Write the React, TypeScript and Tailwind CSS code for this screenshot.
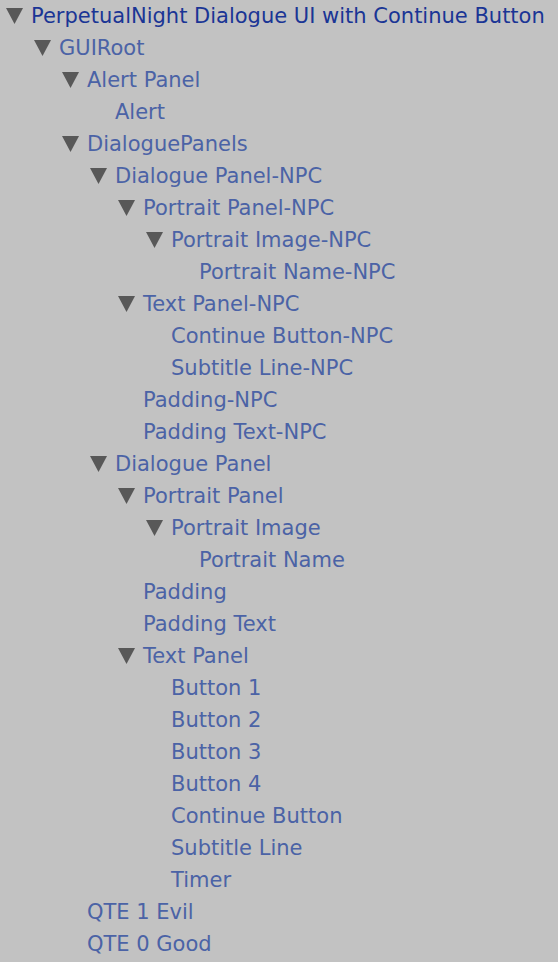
import React from 'react';

type Node = { name: string; level: number; open?: boolean; root?: boolean };

const nodes: Node[] = [
  { name: 'PerpetualNight Dialogue UI with Continue Button', level: 0, open: true, root: true },
  { name: 'GUIRoot', level: 1, open: true },
  { name: 'Alert Panel', level: 2, open: true },
  { name: 'Alert', level: 3 },
  { name: 'DialoguePanels', level: 2, open: true },
  { name: 'Dialogue Panel-NPC', level: 3, open: true },
  { name: 'Portrait Panel-NPC', level: 4, open: true },
  { name: 'Portrait Image-NPC', level: 5, open: true },
  { name: 'Portrait Name-NPC', level: 6 },
  { name: 'Text Panel-NPC', level: 4, open: true },
  { name: 'Continue Button-NPC', level: 5 },
  { name: 'Subtitle Line-NPC', level: 5 },
  { name: 'Padding-NPC', level: 4 },
  { name: 'Padding Text-NPC', level: 4 },
  { name: 'Dialogue Panel', level: 3, open: true },
  { name: 'Portrait Panel', level: 4, open: true },
  { name: 'Portrait Image', level: 5, open: true },
  { name: 'Portrait Name', level: 6 },
  { name: 'Padding', level: 4 },
  { name: 'Padding Text', level: 4 },
  { name: 'Text Panel', level: 4, open: true },
  { name: 'Button 1', level: 5 },
  { name: 'Button 2', level: 5 },
  { name: 'Button 3', level: 5 },
  { name: 'Button 4', level: 5 },
  { name: 'Continue Button', level: 5 },
  { name: 'Subtitle Line', level: 5 },
  { name: 'Timer', level: 5 },
  { name: 'QTE 1 Evil', level: 2 },
  { name: 'QTE 0 Good', level: 2 },
];

const Arrow = () => (
  <svg width="17" height="16" viewBox="0 0 17 16" className="shrink-0">
    <path d="M0 0 H17 L8.5 16 Z" fill="#585858" />
  </svg>
);

export default function App() {
  return (
    <div
      className="w-[558px] h-[962px] bg-[#c2c2c2] overflow-hidden"
      style={{ fontFamily: '"DejaVu Sans", "Liberation Sans", sans-serif' }}
    >
      {nodes.map((n, i) => (
        <div key={i} className="h-8 flex items-center">
          <div className="flex items-center" style={{ paddingLeft: 6 + n.level * 28 }}>
            <div className="w-[25px] flex items-center">{n.open && <Arrow />}</div>
            <span
              className={`text-[21px] leading-none whitespace-nowrap ${
                n.root ? 'text-[#1a3595]' : 'text-[#4b63a6]'
              }`}
            >
              {n.name}
            </span>
          </div>
        </div>
      ))}
    </div>
  );
}
